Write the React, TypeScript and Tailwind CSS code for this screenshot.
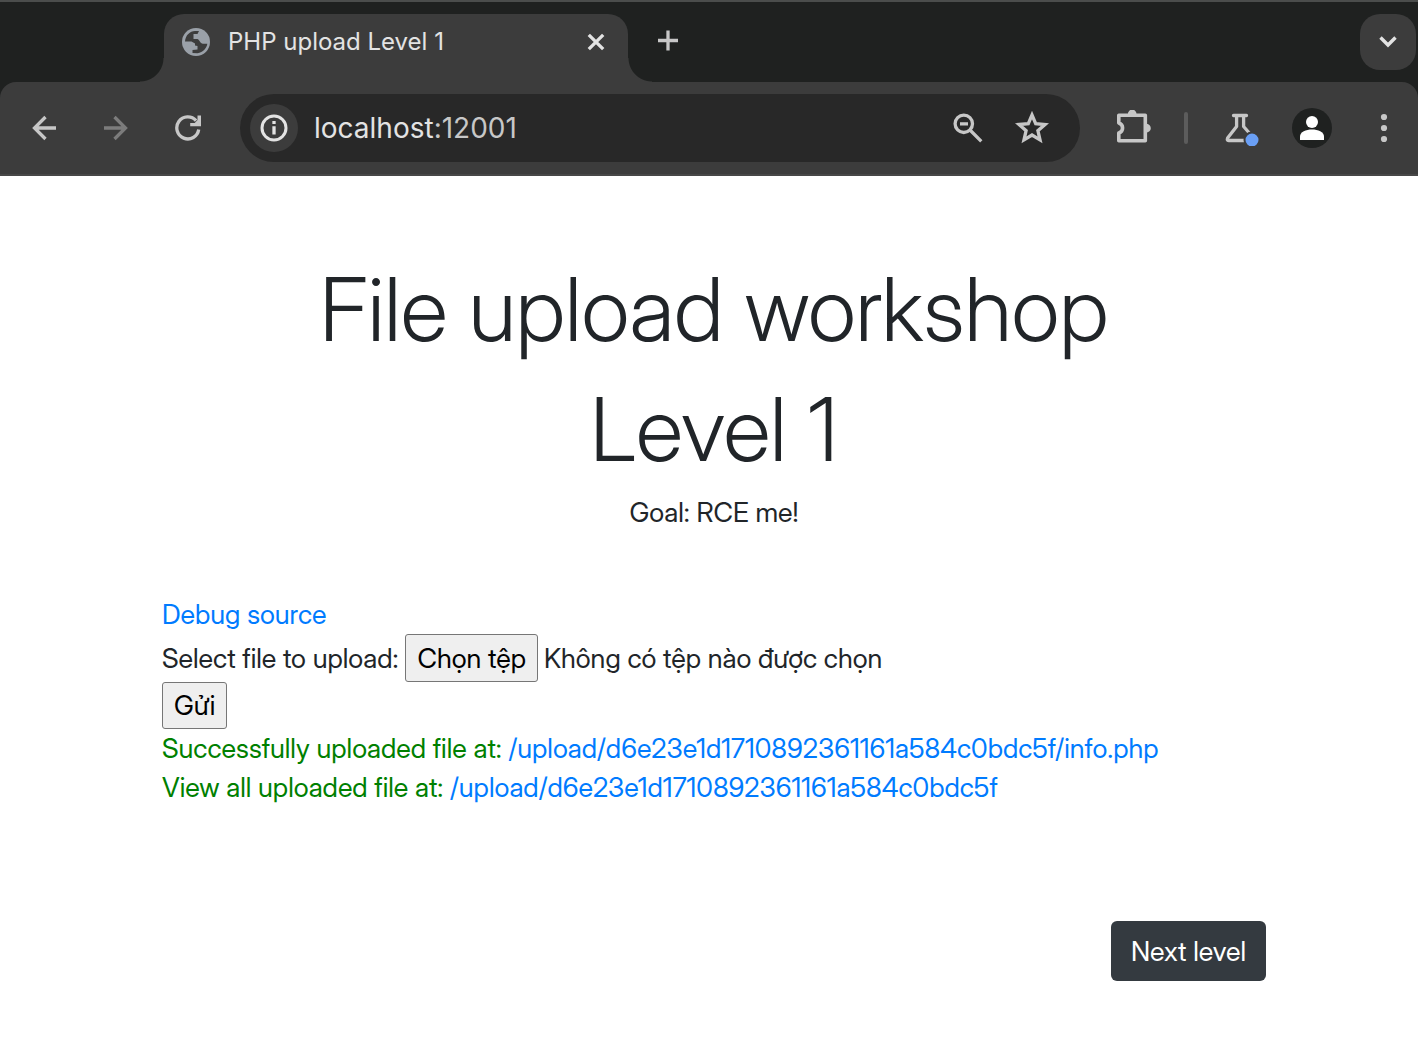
import React from "react";

type IconProps = { w: number; h: number; box: string; className?: string; children: React.ReactNode };

function Icon({ w, h, box, className, children }: IconProps) {
  return (
    <svg width={w} height={h} viewBox={box} fill="none" stroke="currentColor" strokeWidth="3.3" className={className} aria-hidden="true">
      {children}
    </svg>
  );
}

function TabStrip() {
  return (
    <div className="flex h-[82px] items-start border-t-2 border-[#4b4d4c] bg-[#1f2120] pt-3 pr-0.5 pl-[164px]">
      <div className="relative flex h-[68px] w-[464px] items-start rounded-t-[20px] bg-[#3c3c3c] pt-3.5 pr-[22px] pl-[18px]">
        <span className="absolute bottom-0 -left-6 size-6 bg-[radial-gradient(circle_at_0_0,transparent_23px,#3c3c3c_24px)]" />
        <span className="absolute -right-6 bottom-0 size-6 bg-[radial-gradient(circle_at_100%_0,transparent_23px,#3c3c3c_24px)]" />
        <Icon w={28} h={28} box="182 28 28 28" className="text-[#9aa0a8]">
          <circle cx="196" cy="42" r="14" fill="currentColor" stroke="none" />
          <path
            stroke="none"
            fill="#3c3c3c"
            d="M185 41.5C185.500 35 190 31.200 195 31H199L197.500 34H193.500V39H197.500C200 40 200 43.500 203 43.800H207.300C207 48 203 52.300 197.500 53.200L192.500 53V50L197.500 49.500V46L195 45.500V43.500L191.500 41.500Z"
          />
        </Icon>
        <span className="ml-[18px] flex-1 text-2xl leading-7 text-[#e3e3e3]">PHP upload Level 1</span>
        <button type="button" aria-label="Close tab" className="mt-1 text-[#e3e3e3]">
          <Icon w={20} h={20} box="586 32 20 20"><path d="M588.8 34.8l14.4 14.4M603.2 34.8l-14.4 14.4" /></Icon>
        </button>
      </div>
      <button type="button" aria-label="New tab" className="mt-4 ml-[29px] text-[#c7c7c7]">
        <Icon w={22} h={22} box="657 30 22 22"><path d="M658 40.5h20M668 30.5v20" /></Icon>
      </button>
      <button type="button" aria-label="Search tabs" className="ml-auto flex size-14 items-center justify-center rounded-[20px] bg-[#3c3c3c] text-[#e3e3e3]">
        <Icon w={20} h={20} box="1378 32 20 20"><path strokeWidth="3.4" d="M1380.500 37.500l7.500 7.500 7.500-7.500" /></Icon>
      </button>
    </div>
  );
}

function Toolbar() {
  return (
    <div className="bg-[#1f2120]">
      <div className="flex h-[94px] items-center rounded-t-2xl border-b-2 border-[#474747] bg-[#3c3c3c] pr-[18px] pl-[30px] text-[#c7c7c7]">
        <button type="button" aria-label="Back">
          <Icon w={28} h={28} box="30 114 28 28"><path d="M56 128H34M45.500 117l-11 11 11 11" /></Icon>
        </button>
        <button type="button" aria-label="Forward" className="ml-11 text-[#7c7c7c]">
          <Icon w={28} h={28} box="102 114 28 28"><path d="M104 128h22M114.500 117l11 11-11 11" /></Icon>
        </button>
        <button type="button" aria-label="Reload" className="ml-11">
          <Icon w={28} h={28} box="174 114 28 28">
            <path d="M198.700 129.500a11 11 0 1 1-2.600-8.800" />
            <path stroke="none" fill="currentColor" d="M197.500 115.500h3.500v10.700H190.200v-3.200h4.500l2.800-3z" />
          </Icon>
        </button>
        <div className="ml-[38px] flex h-[68px] min-w-0 flex-1 items-center rounded-full bg-[#282828] pr-7 pl-2.5">
          <button type="button" aria-label="Site information" className="flex size-12 shrink-0 items-center justify-center rounded-full bg-[#3c3c3c] text-[#e3e3e3]">
            <Icon w={28} h={28} box="260 114 28 28">
              <circle cx="274" cy="128" r="12" strokeWidth="3" />
              <path d="M274 126.2v8.3M274 121v3" />
            </Icon>
          </button>
          <a href="#" className="ml-4 flex-1 text-[28px] leading-9 text-[#e3e3e3]">
            localhost<span className="text-[#c7c7c7]">:12001</span>
          </a>
          <button type="button" aria-label="Zoom out">
            <Icon w={32} h={32} box="952 112 32 32">
              <circle cx="963.8" cy="123.8" r="8.700" />
              <path d="M960 123.8h8M970 130l11.3 11.3" />
            </Icon>
          </button>
          <button type="button" aria-label="Bookmark this page" className="ml-7">
            <Icon w={40} h={40} box="1012 109 40 40">
              <path d="M1032 116l3.700 8.700 9.300.800-7.100 6.200 2.100 9.100-8-4.800-8 4.800 2.100-9.100-7.100-6.200 9.300-.800z" />
            </Icon>
          </button>
        </div>
        <button type="button" aria-label="Extensions" className="ml-9">
          <Icon w={36} h={36} box="1116 110 36 36">
            <path strokeWidth="3.600" strokeLinejoin="round" d="M1118.800 115.200h26.500v25.500h-26.500v-7.600a5.200 5.200 0 0 0 0-10z" />
            <path stroke="none" fill="currentColor" d="M1127.800 114.500a4.400 5 0 0 1 8.800 0zM1146 123.800a4.800 4.400 0 0 1 0 8.800z" />
          </Icon>
        </button>
        <span className="ml-8 h-8 w-1 rounded-full bg-[#5c5c5c]" />
        <button type="button" aria-label="Experiments" className="ml-9">
          <Icon w={36} h={36} box="1224 110 36 36">
            <path strokeLinecap="round" strokeLinejoin="round" d="M1233.500 115.500h13M1236.600 116v10.500l-9 11.500q-1 2.500 1 2.500H1245M1243.600 116v10.500l7 8" />
            <circle cx="1252" cy="140" r="7.500" fill="#6a9ff5" stroke="#3c3c3c" strokeWidth="2" />
          </Icon>
        </button>
        <button type="button" aria-label="Profile" className="ml-8 flex size-10 items-center justify-center rounded-full bg-[#1f2120] text-white">
          <Icon w={24} h={24} box="1300 116 24 24">
            <g fill="currentColor" stroke="none">
              <circle cx="1312" cy="122" r="6" />
              <path d="M1300 140v-3.500c0-4.500 6-7 12-7s12 2.500 12 7v3.500z" />
            </g>
          </Icon>
        </button>
        <button type="button" aria-label="Menu" className="ml-9">
          <Icon w={32} h={32} box="1368 112 32 32">
            <g fill="currentColor" stroke="none"><circle cx="1384" cy="117" r="3.100" /><circle cx="1384" cy="128" r="3.100" /><circle cx="1384" cy="139" r="3.100" /></g>
          </Icon>
        </button>
      </div>
    </div>
  );
}

export default function App() {
  return (
    <div className="min-h-screen bg-white font-['Inter',sans-serif] text-[#212529]">
      <header>
        <TabStrip />
        <Toolbar />
      </header>
      <main className="pt-[73px] pr-[152px] pb-[61px] pl-[162px] font-['Inter_Display','Inter',sans-serif] text-[27px] leading-[39px]">
        <div className="text-center">
          <h1 className="text-[88px] leading-[120px] font-light">File upload workshop<br />Level 1</h1>
          <p className="mt-1">Goal: RCE me!</p>
        </div>
        <div className="mt-16 leading-[38px]">
          <a href="#" className="text-[#007bff]">Debug source</a>
        </div>
        <form>
          <div className="flex items-center whitespace-nowrap">
            <label htmlFor="upload">Select file to upload:</label>
            <label htmlFor="upload" className="ml-[7px] flex h-12 items-center rounded-[3px] border border-[#767676] bg-[#efefef] px-[11px] text-black">Chọn tệp</label>
            <input id="upload" type="file" className="sr-only" />
            <span className="ml-1.5">Không có tệp nào được chọn</span>
          </div>
          <button type="submit" className="flex h-[47px] items-center rounded-[3px] border border-[#767676] bg-[#efefef] px-[11px] text-black">Gửi</button>
        </form>
        <p className="text-[#008000]">Successfully uploaded file at: <a href="#" className="text-[#007bff]">/upload/d6e23e1d1710892361161a584c0bdc5f/info.php</a></p>
        <p className="text-[#008000]">View all uploaded file at: <a href="#" className="text-[#007bff]">/upload/d6e23e1d1710892361161a584c0bdc5f</a></p>
        <div className="mt-[114px] flex justify-end">
          <button type="button" className="h-[60px] rounded-md bg-[#343a40] px-5 text-white">Next level</button>
        </div>
      </main>
    </div>
  );
}
